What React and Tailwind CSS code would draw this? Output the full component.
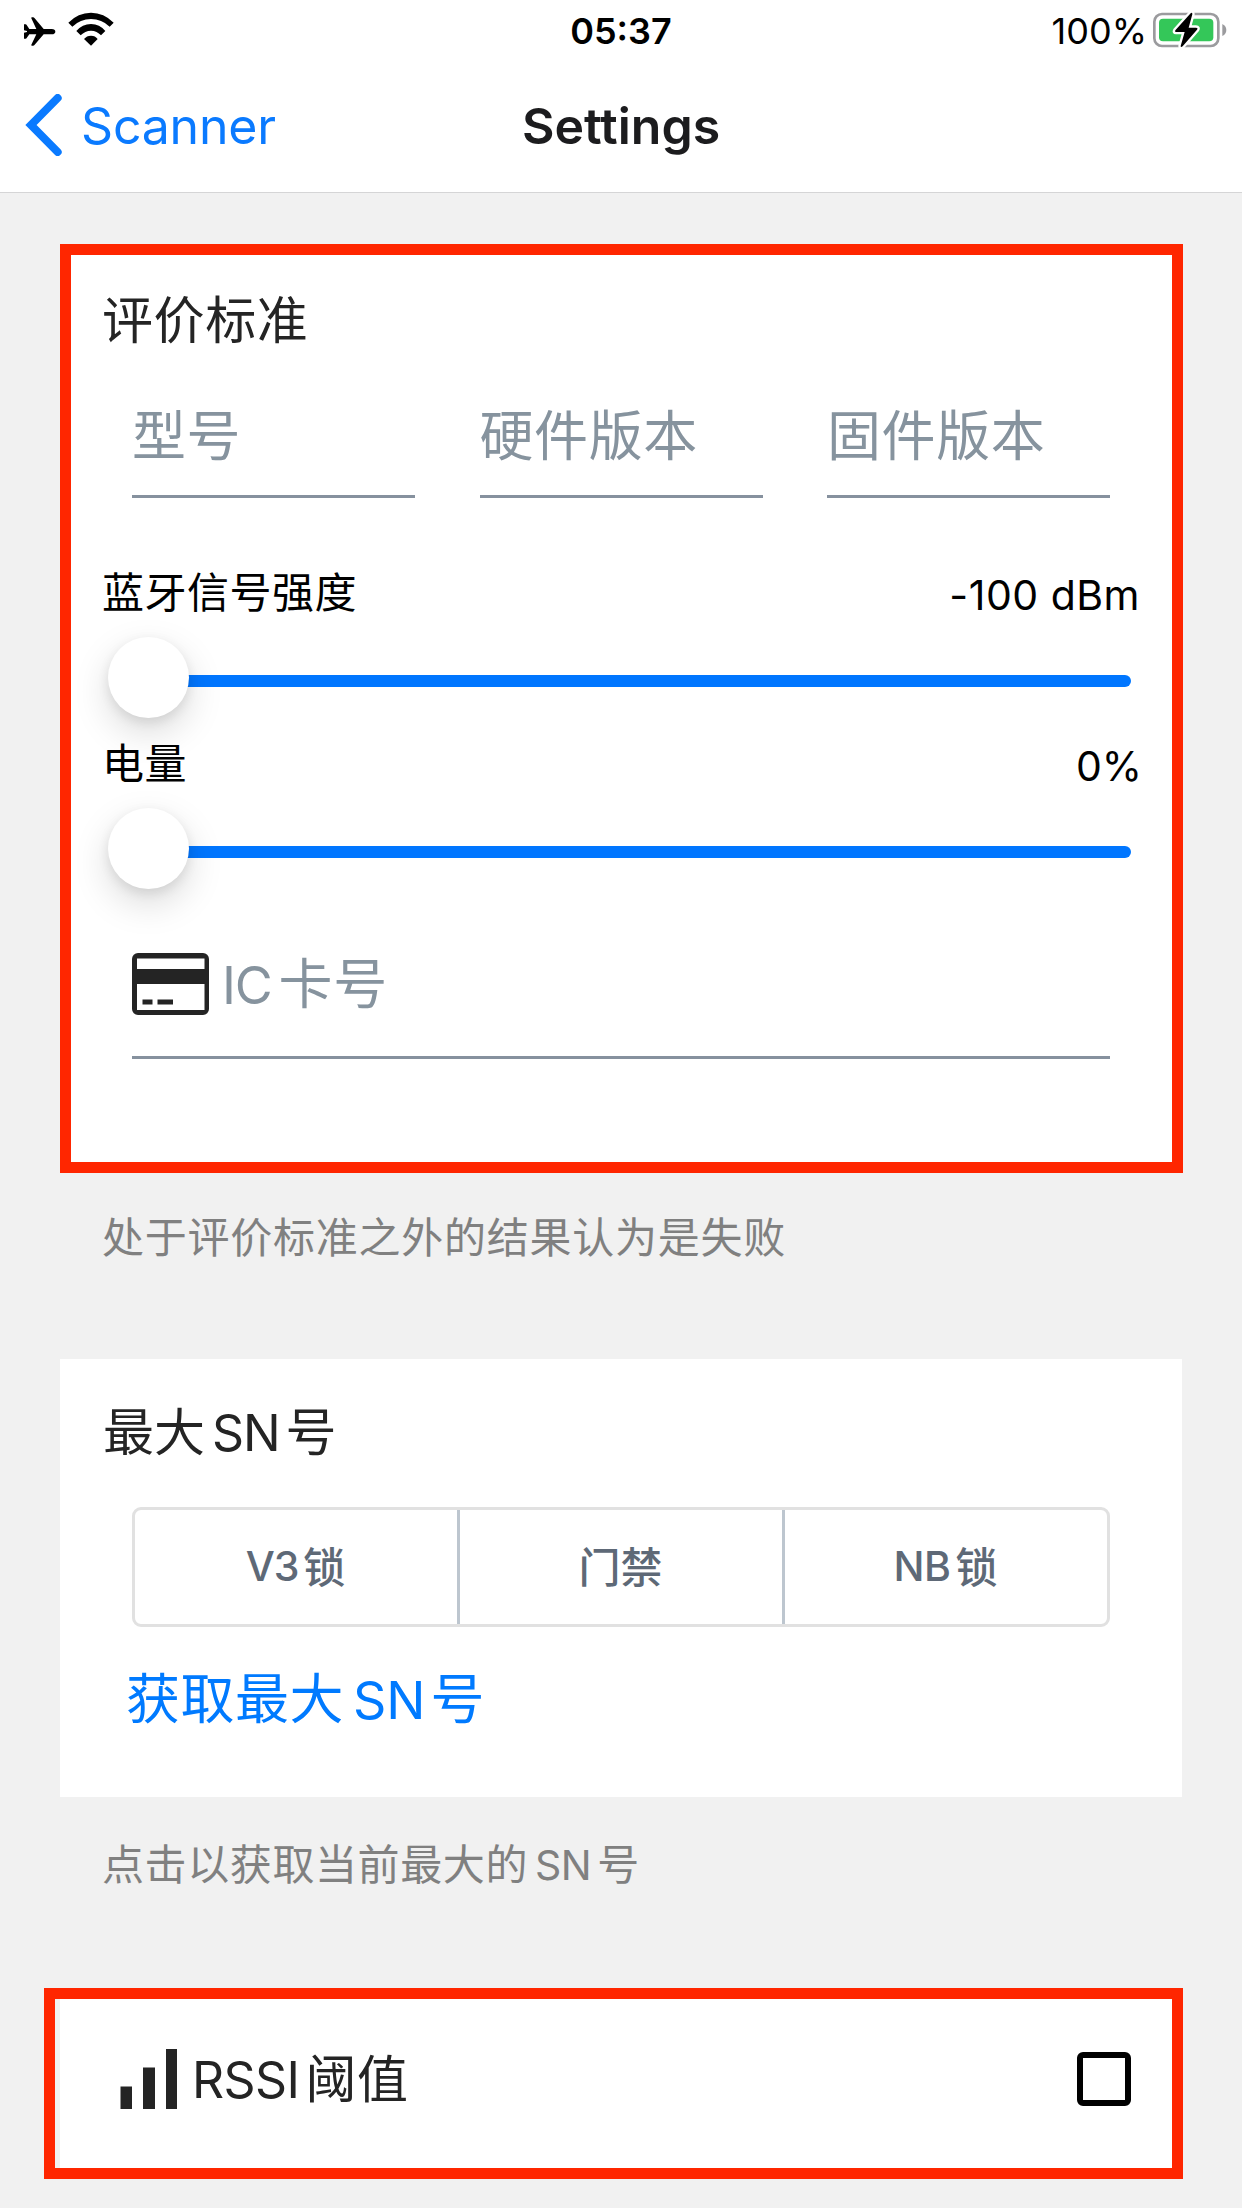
function AirplaneIcon() {
  return (
    <svg className="block h-[29px] w-[32px]" viewBox="72 51 96 87" fill="#000">
      <path d="M72 73h5q2 0 3 2l8 12 21 0-15-32q-1-3 2-3h3q3 0 5 3l27 32h24q11 1 11 8t-11 8h-24l-27 31q-2 3-5 3h-3q-3 0-2-3l15-31-21 0-8 11q-1 2-3 2h-5V98l9-2v-3l-9-2z" />
    </svg>
  )
}

function WifiIcon() {
  return (
    <svg className="block h-[34px] w-[46px]" viewBox="204 37 138 102" fill="#000">
      <path d="M205 69Q234 39 273 39t68 30l-12 12Q305 58 273 58t-56 23z" />
      <path d="M229 94Q247 73 273 73t43 21l-13 13Q291 93 273 93t-31 14z" />
      <path d="M252 118Q260 108 273 108t20 10L273 138z" />
    </svg>
  )
}

function BatteryIcon() {
  return (
    <svg className="block h-[36px] w-[74px]" viewBox="458 36 222 108">
      <rect x="462" y="42" width="192" height="96" rx="23" fill="#fff" stroke="#9b9b9e" strokeWidth="8" />
      <rect x="476" y="56" width="163" height="68" rx="12" fill="#34c759" />
      <path d="M666 72q12 6 12 18t-12 18z" fill="#9b9b9e" />
      <path
        d="M571 40l-46 51q-3 5 2 5h26l-12 42q0 6 6 1l43-50q4-6-3-6h-22l11-40q0-7-5-3z"
        fill="#000"
        stroke="#fff"
        strokeWidth="14"
        strokeLinejoin="round"
        paintOrder="stroke"
      />
    </svg>
  )
}

function BackChevron() {
  return (
    <svg className="block h-[62px] w-[38px]" viewBox="74 281 114 186" fill="none">
      <path d="M172 293L92 374l80 81" stroke="#0a7aff" strokeWidth="24" strokeLinecap="round" strokeLinejoin="miter" />
    </svg>
  )
}

function CardIcon() {
  return (
    <svg className="block h-[62px] w-[78px]" viewBox="0 0 78 62" fill="#242424">
      <path
        fillRule="evenodd"
        d="M6 0h65a6 6 0 0 1 6 6v50a6 6 0 0 1-6 6H6a6 6 0 0 1-6-6V6a6 6 0 0 1 6-6zM5 5.500v10.500h67.500V5.500zM5 31v26h67.500V31z"
      />
      <path d="M10.500 46.500h10v5H10.500zM25.500 46.500H41v5H25.500z" />
    </svg>
  )
}

function SignalIcon() {
  return (
    <svg className="block h-[60px] w-[57px]" viewBox="0 0 57 60" fill="#242424">
      <path d="M0.500 37.500h11.500V60H0.500zM23 18.500h12V60H23zM46 0h11v60H46z" />
    </svg>
  )
}

function Field({ label }) {
  return (
    <div className="h-[95px] w-[283px] border-b-[3px] border-[#86919e] pt-[2px] text-[54px] leading-[64px] tracking-[0.6px] whitespace-nowrap text-[#86939e]">
      {label}
    </div>
  )
}

function SliderRow({ label, value }) {
  return (
    <div className="h-[171px]">
      <div className="flex items-start justify-between pr-[32px] pl-[31px] text-black">
        <span className="text-[42px] leading-[52px] tracking-[0.5px]">{label}</span>
        {value}
      </div>
      <div className="relative mt-[14px] ml-[37px] flex h-[81px] w-[1023px] flex-col pt-[38px] pl-[20px]">
        <div className="h-[12px] rounded-full bg-[#0076ff]" />
        <div className="absolute top-0 left-0 size-[81px] rounded-full bg-white shadow-[0_14px_36px_rgba(0,0,0,0.15),0_4px_12px_rgba(0,0,0,0.09)]" />
      </div>
    </div>
  )
}

function Segment({ children }) {
  return <div className="flex flex-1 items-center justify-center pr-px">{children}</div>
}

export default function App() {
  return (
    <div className="h-[2208px] w-[1242px] overflow-hidden bg-[#f1f1f1] font-['Inter','Noto_Sans_CJK_SC',sans-serif] text-[#242424]">
      <header className="h-[193px] border-b border-[#d5d5d6] bg-white">
        <div className="grid h-[62px] grid-cols-3 text-[36px] leading-[62px] text-black">
          <div className="flex pl-[24px]">
            <div className="pt-[17px]"><AirplaneIcon /></div>
            <div className="pt-[12px] pl-[12px]"><WifiIcon /></div>
          </div>
          <div className="text-center font-semibold">05:37</div>
          <div className="flex justify-end pr-[15px]">
            <span>100%</span>
            <div className="pt-[12px] pl-[6px]"><BatteryIcon /></div>
          </div>
        </div>
        <div className="grid grid-cols-3 text-[50px] leading-[128px]">
          <div className="flex text-[#0a7aff]">
            <div className="pt-[32px] pl-[25px]"><BackChevron /></div>
            <span className="pl-[18px] tracking-[-0.2px]">Scanner</span>
          </div>
          <div className="text-center font-semibold text-[#1c1c1e]">Settings</div>
        </div>
      </header>

      <main>
        <section className="mt-[51px] ml-[60px] h-[929px] w-[1123px] border-[11px] border-[#ff2600] bg-white">
          <h2 className="mt-[35px] pl-[31px] text-[51px] leading-[61px] tracking-[0.6px]">评价标准</h2>
          <div className="mt-[52px] ml-[61px] flex w-[978px] justify-between">
            <Field label="型号" />
            <Field label="硬件版本" />
            <Field label="固件版本" />
          </div>
          <div className="mt-[69px]">
            <SliderRow
              label="蓝牙信号强度"
              value={<span className="text-[41px] leading-[56px] tracking-[0.5px]">-100 dBm</span>}
            />
            <SliderRow
              label="电量"
              value={<span className="-mr-[2px] text-[41px] leading-[56px]">0%</span>}
            />
          </div>
          <div className="mt-[43px] ml-[61px] flex h-[107px] w-[978px] border-b-[3px] border-[#86919e] text-[54px] leading-[65px] text-[#86939e]">
            <div className="pt-px"><CardIcon /></div>
            <div className="pl-[12px] whitespace-nowrap">
              <span className="text-[52px] leading-none tracking-[-1.2px]">IC</span>
              <span className="ml-[7px] leading-none tracking-[0.8px]">卡号</span>
            </div>
          </div>
        </section>
        <p className="mt-[40px] pl-[102px] text-[42px] leading-[50px] tracking-[0.75px] text-[#808080]">
          处于评价标准之外的结果认为是失败
        </p>

        <section className="mt-[96px] ml-[60px] h-[438px] w-[1122px] bg-white pt-[43px]">
          <h2 className="pl-[43px] text-[51px] leading-[61px]">
            最大<span className="mr-[6px] ml-[7px] text-[50px] leading-none tracking-[-1.2px]">SN</span>号
          </h2>
          <div className="mt-[44px] ml-[72px] flex h-[120px] w-[978px] divide-x-[3px] divide-[#bdc6cf] rounded-[9px] border-[3px] border-[#e1e1e1] text-[42px] font-medium text-[#5e6977]">
            <Segment>
              <span className="text-[41px] tracking-[-1.2px]">V3</span>
              <span className="ml-[5px]">锁</span>
            </Segment>
            <Segment>门禁</Segment>
            <Segment>
              <span className="text-[41px] tracking-[-0.5px]">NB</span>
              <span className="ml-[5px]">锁</span>
            </Segment>
          </div>
          <div className="mt-[41px] pl-[66px] text-[54px] leading-[64px] tracking-[0.5px] text-[#007aff]">
            获取最大<span className="mr-[5px] ml-[9px] text-[52px] leading-none tracking-normal">SN</span>号
          </div>
        </section>
        <p className="mt-[43px] pl-[102px] text-[42px] leading-[50px] tracking-[0.6px] text-[#808080]">
          点击以获取当前最大的<span className="mr-[6px] ml-[7px] text-[41px] leading-none tracking-[-0.5px]">SN</span>号
        </p>

        <section className="mt-[98px] ml-[44px] h-[191px] w-[1139px] border-[11px] border-[#ff2600] pl-[5px]">
          <div className="flex h-full items-start bg-white pt-[50px] pr-[41px] pl-[60px]">
            <SignalIcon />
            <div className="ml-[15px] flex-1 text-[51px] leading-[62px]">
              <span className="text-[50px] leading-none tracking-[-0.6px]">RSSI</span>
              <span className="ml-[6px] leading-none tracking-[0.6px]">阈值</span>
            </div>
            <div className="mt-[3px] size-[54px] rounded-[6px] border-[6px] border-black" />
          </div>
        </section>
      </main>
    </div>
  )
}
